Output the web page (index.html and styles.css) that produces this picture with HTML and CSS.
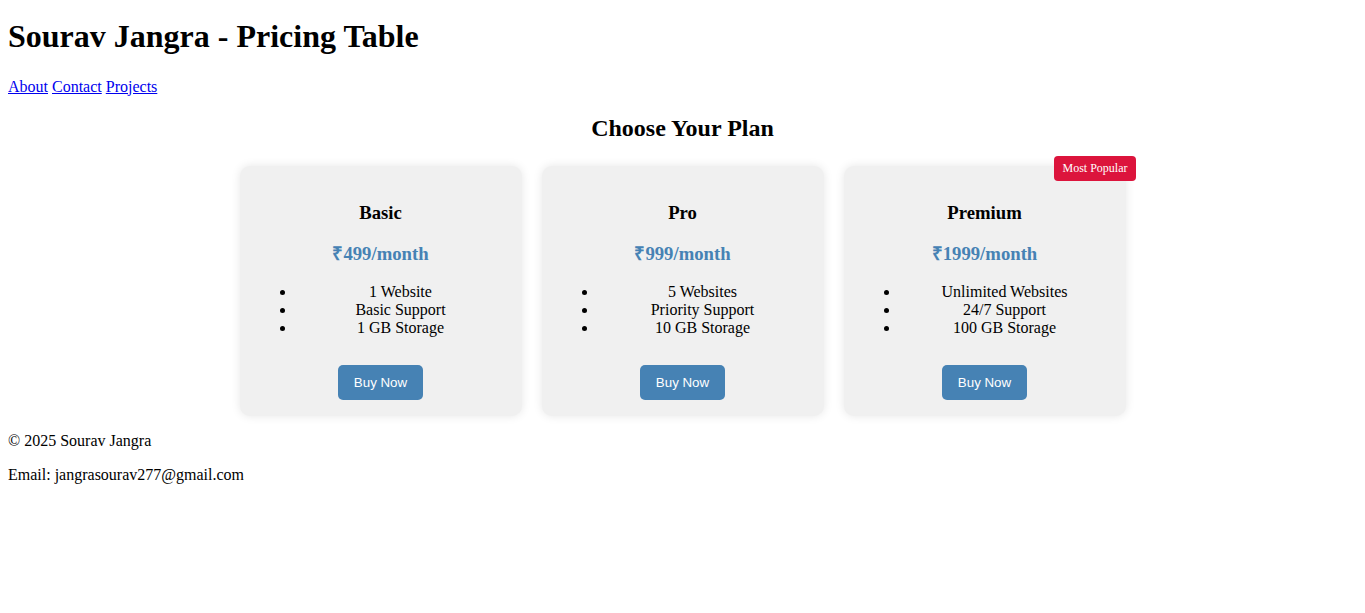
FILE: index.html
```html
<!DOCTYPE html>
<html lang="en">
<head>
<meta charset="utf-8">
<title>Sourav Jangra - Pricing Table</title>
<link rel="stylesheet" href="styles.css">
</head>
<body>
<header class="site-header">
  <h1 class="site-title">Sourav Jangra - Pricing Table</h1>
  <nav class="site-nav">
    <a href="#">About</a> <a href="#">Contact</a> <a href="#">Projects</a>
  </nav>
</header>
<main>
  <h2 class="section-title">Choose Your Plan</h2>
  <div class="plans">
    <div class="plan">
      <h3 class="plan-name">Basic</h3>
      <p class="plan-price">₹499/month</p>
      <ul class="plan-features">
        <li>1 Website</li>
        <li>Basic Support</li>
        <li>1 GB Storage</li>
      </ul>
      <button class="buy-btn">Buy Now</button>
    </div>
    <div class="plan">
      <h3 class="plan-name">Pro</h3>
      <p class="plan-price">₹999/month</p>
      <ul class="plan-features">
        <li>5 Websites</li>
        <li>Priority Support</li>
        <li>10 GB Storage</li>
      </ul>
      <button class="buy-btn">Buy Now</button>
    </div>
    <div class="plan">
      <span class="badge">Most Popular</span>
      <h3 class="plan-name">Premium</h3>
      <p class="plan-price">₹1999/month</p>
      <ul class="plan-features">
        <li>Unlimited Websites</li>
        <li>24/7 Support</li>
        <li>100 GB Storage</li>
      </ul>
      <button class="buy-btn">Buy Now</button>
    </div>
  </div>
</main>
<footer class="site-footer">
  <p>© 2025 Sourav Jangra</p>
  <p>Email: jangrasourav277@gmail.com</p>
</footer>
</body>
</html>
```
FILE: styles.css
```css
body {
  margin: 8px;
  font-family: "Liberation Serif", "Times New Roman", serif;
  font-size: 16px;
  color: #000;
  background: #fff;
}

.site-header {
  padding-top: 10px;
}

.site-title {
  font-size: 32px;
  font-weight: bold;
  margin: 0 0 22.5px;
}

.site-nav a {
  color: #0000ee;
  text-decoration: underline;
}

.section-title {
  text-align: center;
  font-size: 24px;
  margin: 19.92px 0;
}

.plans {
  display: flex;
  justify-content: center;
  gap: 20px;
  padding-top: 4px;
}

.plan {
  position: relative;
  width: 250px;
  padding: 16px;
  background: #f0f0f0;
  border-radius: 10px;
  box-shadow: 0 0 10px rgba(0, 0, 0, 0.1);
  text-align: center;
}

.plan-name {
  font-size: 18.72px;
  margin: 19.72px 0 15.72px;
}

.plan-price {
  font-size: 18.72px;
  font-weight: bold;
  color: #4682b4;
  margin: 15.72px 0 18.72px;
}

.plan-features {
  margin: 16px 0 28px;
  padding-left: 40px;
}

.buy-btn {
  font-family: "Liberation Sans", Arial, sans-serif;
  font-size: 13.333px;
  color: #fff;
  background: #4682b4;
  border: none;
  border-radius: 5px;
  padding: 10px 16px;
  cursor: pointer;
}

.badge {
  position: absolute;
  top: -10px;
  right: -10px;
  background: #dc143c;
  color: #fff;
  font-size: 12px;
  padding: 5px 8px;
  border-radius: 4px;
}

.site-footer p {
  margin: 16px 0;
}
```
